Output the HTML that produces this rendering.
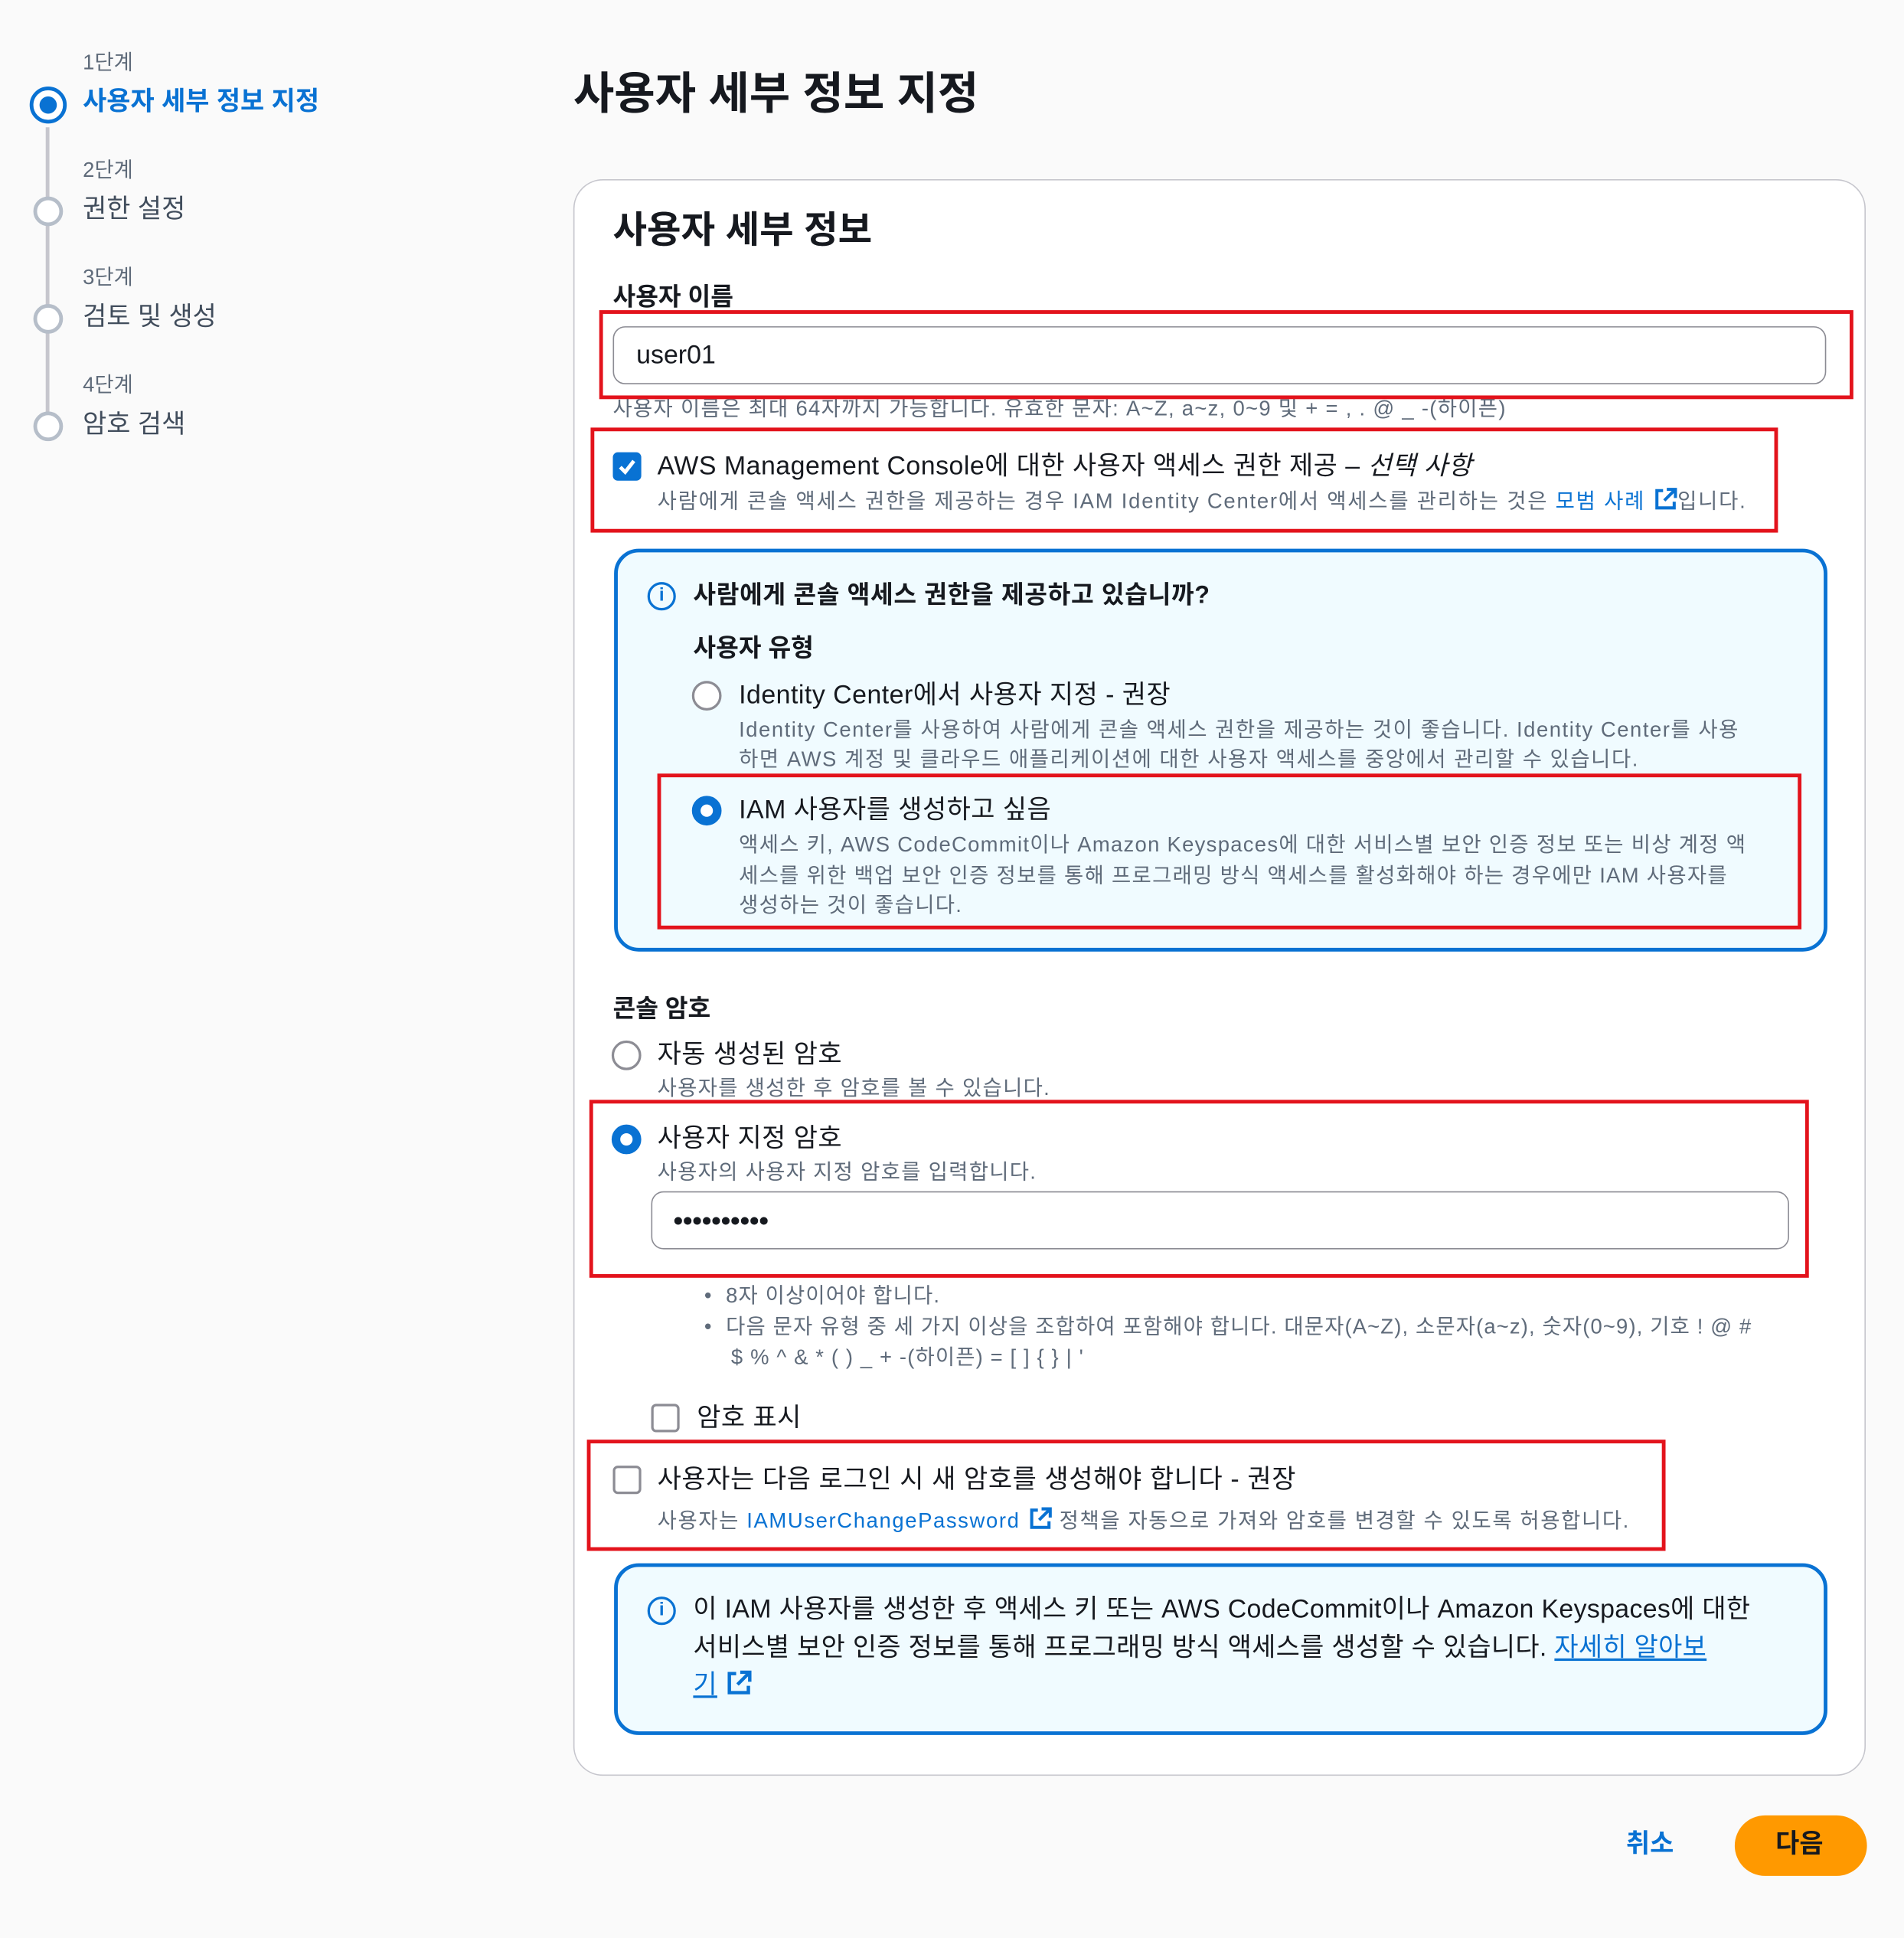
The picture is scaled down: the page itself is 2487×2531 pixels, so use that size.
<!DOCTYPE html>
<html><head><meta charset="utf-8">
<style>
html,body{margin:0;padding:0;background:#fafafa;}
body{width:2487px;height:2531px;overflow:hidden;position:relative;}
#w{position:absolute;left:0;top:0;width:1541px;height:1568px;transform:scale(1.6139);transform-origin:0 0;font-family:"Liberation Sans","Noto Sans CJK KR",sans-serif;color:#16191f;}
.a{position:absolute;white-space:nowrap;}
.g{color:#5f6b7a;}
.b{font-weight:bold;}
.blue{color:#0972d3;}
.red{position:absolute;border:3px solid #e3131c;box-sizing:border-box;}
.rad{position:absolute;width:24px;height:24px;border-radius:50%;box-sizing:border-box;border:2px solid #8c8c94;background:#fff;}
.rad.on{border:7px solid #0972d3;}
.chk{position:absolute;width:23px;height:23px;border-radius:4px;box-sizing:border-box;border:2px solid #8c8c94;background:#fff;}
.ext{display:inline-block;vertical-align:-3px;margin-left:6px;}
.info{position:absolute;width:23px;height:23px;border:2.5px solid #0972d3;border-radius:50%;box-sizing:border-box;color:#0972d3;font-size:15px;font-weight:bold;text-align:center;line-height:18px;}
</style></head><body><div id="w">

<!-- stepper -->
<div class="a g" style="left:67px;top:40px;font-size:17px;line-height:22px;">1단계</div>
<div class="a b blue" style="left:67px;top:69px;font-size:21px;line-height:28px;">사용자 세부 정보 지정</div>
<div style="position:absolute;left:24px;top:70px;width:30px;height:30px;border-radius:50%;border:3px solid #0972d3;box-sizing:border-box;background:#fff;"><div style="position:absolute;left:5px;top:5px;width:14px;height:14px;border-radius:50%;background:#0972d3;"></div></div>
<div style="position:absolute;left:37px;top:103px;width:3px;height:232px;background:#c6c6cd;"></div>
<div class="a g" style="left:67px;top:127px;font-size:17px;line-height:22px;">2단계</div>
<div class="a g" style="left:67px;top:156px;font-size:21px;line-height:28px;color:#414d5c;">권한 설정</div>
<div class="rad" style="left:27px;top:159px;border:3px solid #b6bec9;"></div>
<div class="a g" style="left:67px;top:214px;font-size:17px;line-height:22px;">3단계</div>
<div class="a g" style="left:67px;top:243px;font-size:21px;line-height:28px;color:#414d5c;">검토 및 생성</div>
<div class="rad" style="left:27px;top:246px;border:3px solid #b6bec9;"></div>
<div class="a g" style="left:67px;top:301px;font-size:17px;line-height:22px;">4단계</div>
<div class="a g" style="left:67px;top:330px;font-size:21px;line-height:28px;color:#414d5c;">암호 검색</div>
<div class="rad" style="left:27px;top:333px;border:3px solid #b6bec9;"></div>

<div class="a b" style="left:464px;top:54px;font-size:36px;line-height:44px;">사용자 세부 정보 지정</div>

<!-- card -->
<div style="position:absolute;left:464px;top:145px;width:1046px;height:1292px;border:1.5px solid #c6c6cd;border-radius:24px;background:#fff;box-sizing:border-box;"></div>
<div class="a b" style="left:496px;top:168px;font-size:30px;line-height:38px;">사용자 세부 정보</div>
<div class="a b" style="left:496px;top:228px;font-size:20px;line-height:26px;">사용자 이름</div>
<div style="position:absolute;left:496px;top:264px;width:982px;height:47px;border:1.5px solid #8c8c94;border-radius:10px;box-sizing:border-box;"></div>
<div class="a" style="left:515px;top:274px;font-size:21px;line-height:27px;">user01</div>
<div class="a g" style="left:496px;top:320px;font-size:17px;line-height:22px;letter-spacing:0.8px;">사용자 이름은 최대 64자까지 가능합니다. 유효한 문자: A~Z, a~z, 0~9 및 + = , . @ _ -(하이픈)</div>
<div class="red" style="left:485px;top:251px;width:1015px;height:72px;"></div>

<div class="chk" style="left:496px;top:366px;background:#0972d3;border-color:#0972d3;"><svg width="19" height="19" viewBox="0 0 19 19" style="position:absolute;left:0;top:0"><path d="M4 10 L8 14 L15 5" stroke="#fff" stroke-width="3" fill="none"/></svg></div>
<div class="a" style="left:532px;top:364px;font-size:21px;line-height:28px;letter-spacing:0.3px;">AWS Management Console에 대한 사용자 액세스 권한 제공 – <i>선택 사항</i></div>
<div class="a g" style="left:532px;top:394px;font-size:17px;line-height:22px;letter-spacing:1.1px;">사람에게 콘솔 액세스 권한을 제공하는 경우 IAM Identity Center에서 액세스를 관리하는 것은 <span class="blue">모범 사례<svg class="ext" width="20" height="20" viewBox="0 0 20 20"><path d="M8 3H3v14h14v-5" stroke="#0972d3" stroke-width="2.5" fill="none"/><path d="M11 2h7v7M18 2l-9 9" stroke="#0972d3" stroke-width="2.5" fill="none"/></svg></span>입니다.</div>
<div class="red" style="left:478px;top:346px;width:961px;height:85px;"></div>

<!-- info box 1 -->
<div style="position:absolute;left:497px;top:444px;width:982px;height:326px;border:3px solid #0972d3;border-radius:20px;background:#f0fbff;box-sizing:border-box;"></div>
<div class="info" style="left:524px;top:471px;">i</div>
<div class="a b" style="left:561px;top:469px;font-size:20px;line-height:26px;letter-spacing:0.4px;">사람에게 콘솔 액세스 권한을 제공하고 있습니까?</div>
<div class="a b" style="left:561px;top:512px;font-size:20px;line-height:26px;">사용자 유형</div>
<div class="rad" style="left:560px;top:551px;"></div>
<div class="a" style="left:598px;top:549px;font-size:21px;line-height:28px;letter-spacing:0.3px;">Identity Center에서 사용자 지정 - 권장</div>
<div class="a g" style="left:598px;top:579px;font-size:17px;line-height:24px;letter-spacing:0.95px;">Identity Center를 사용하여 사람에게 콘솔 액세스 권한을 제공하는 것이 좋습니다. Identity Center를 사용<br>하면 AWS 계정 및 클라우드 애플리케이션에 대한 사용자 액세스를 중앙에서 관리할 수 있습니다.</div>
<div class="rad on" style="left:560px;top:644px;"></div>
<div class="a" style="left:598px;top:642px;font-size:21px;line-height:28px;letter-spacing:0.3px;">IAM 사용자를 생성하고 싶음</div>
<div class="a g" style="left:598px;top:672px;font-size:17px;line-height:24.5px;letter-spacing:0.8px;">액세스 키, AWS CodeCommit이나 Amazon Keyspaces에 대한 서비스별 보안 인증 정보 또는 비상 계정 액<br>세스를 위한 백업 보안 인증 정보를 통해 프로그래밍 방식 액세스를 활성화해야 하는 경우에만 IAM 사용자를<br>생성하는 것이 좋습니다.</div>
<div class="red" style="left:532px;top:626px;width:926px;height:126px;"></div>

<!-- console password -->
<div class="a b" style="left:496px;top:804px;font-size:20px;line-height:26px;">콘솔 암호</div>
<div class="rad" style="left:495px;top:842px;"></div>
<div class="a" style="left:532px;top:840px;font-size:21px;line-height:28px;letter-spacing:0.3px;">자동 생성된 암호</div>
<div class="a g" style="left:532px;top:870px;font-size:17px;line-height:22px;letter-spacing:0.8px;">사용자를 생성한 후 암호를 볼 수 있습니다.</div>
<div class="rad on" style="left:495px;top:910px;"></div>
<div class="a" style="left:532px;top:908px;font-size:21px;line-height:28px;letter-spacing:0.3px;">사용자 지정 암호</div>
<div class="a g" style="left:532px;top:938px;font-size:17px;line-height:22px;letter-spacing:0.8px;">사용자의 사용자 지정 암호를 입력합니다.</div>
<div style="position:absolute;left:527px;top:964px;width:921px;height:47px;border:1.5px solid #8c8c94;border-radius:10px;box-sizing:border-box;background:#fff;"></div>
<div class="a" style="left:545px;top:974px;font-size:22px;line-height:28px;font-weight:bold;">••••••••••</div>
<div class="red" style="left:477px;top:890px;width:987px;height:144px;"></div>

<div class="a g" style="left:570px;top:1037px;font-size:17px;line-height:24px;letter-spacing:0.7px;">•&nbsp; 8자 이상이어야 합니다.</div>
<div class="a g" style="left:570px;top:1062px;font-size:17px;line-height:24.5px;letter-spacing:0.7px;">•&nbsp; 다음 문자 유형 중 세 가지 이상을 조합하여 포함해야 합니다. 대문자(A~Z), 소문자(a~z), 숫자(0~9), 기호 ! @ #<br>&nbsp;&nbsp;&nbsp;&nbsp;$ % ^ &amp; * ( ) _ + -(하이픈) = [ ] { } | '</div>

<div class="chk" style="left:527px;top:1136px;"></div>
<div class="a" style="left:564px;top:1134px;font-size:21px;line-height:28px;letter-spacing:0.3px;">암호 표시</div>

<div class="chk" style="left:496px;top:1186px;"></div>
<div class="a" style="left:532px;top:1184px;font-size:21px;line-height:28px;letter-spacing:0.4px;">사용자는 다음 로그인 시 새 암호를 생성해야 합니다 - 권장</div>
<div class="a g" style="left:532px;top:1219px;font-size:17px;line-height:22px;letter-spacing:1.0px;">사용자는 <span class="blue">IAMUserChangePassword<svg class="ext" width="20" height="20" viewBox="0 0 20 20"><path d="M8 3H3v14h14v-5" stroke="#0972d3" stroke-width="2.5" fill="none"/><path d="M11 2h7v7M18 2l-9 9" stroke="#0972d3" stroke-width="2.5" fill="none"/></svg></span> 정책을 자동으로 가져와 암호를 변경할 수 있도록 허용합니다.</div>
<div class="red" style="left:475px;top:1165px;width:873px;height:90px;"></div>

<!-- info box 2 -->
<div style="position:absolute;left:497px;top:1265px;width:982px;height:139px;border:3px solid #0972d3;border-radius:20px;background:#f0fbff;box-sizing:border-box;"></div>
<div class="info" style="left:524px;top:1292px;">i</div>
<div class="a" style="left:561px;top:1288px;font-size:21px;line-height:30.5px;letter-spacing:0.2px;">이 IAM 사용자를 생성한 후 액세스 키 또는 AWS CodeCommit이나 Amazon Keyspaces에 대한<br>서비스별 보안 인증 정보를 통해 프로그래밍 방식 액세스를 생성할 수 있습니다. <span class="blue" style="text-decoration:underline;">자세히 알아보</span><br><span class="blue" style="text-decoration:underline;">기</span><svg class="ext" width="22" height="22" viewBox="0 0 20 20"><path d="M8 3H3v14h14v-5" stroke="#0972d3" stroke-width="2.5" fill="none"/><path d="M11 2h7v7M18 2l-9 9" stroke="#0972d3" stroke-width="2.5" fill="none"/></svg></div>

<!-- buttons -->
<div class="a b blue" style="left:1316px;top:1479px;font-size:21px;line-height:28px;">취소</div>
<div style="position:absolute;left:1404px;top:1469px;width:107px;height:49px;border-radius:25px;background:#ff9900;"></div>
<div class="a b" style="left:1437px;top:1479px;font-size:21px;line-height:28px;">다음</div>

</div></body></html>
